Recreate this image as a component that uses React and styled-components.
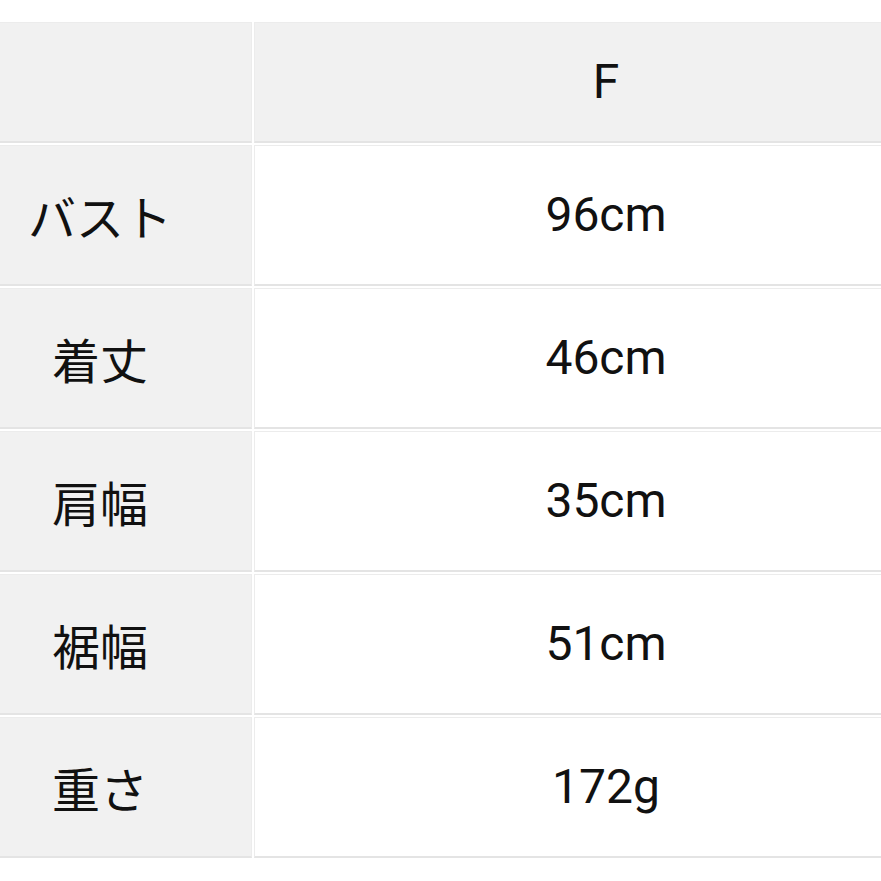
import React from "react";
import styled, { createGlobalStyle } from "styled-components";

const GlobalStyle = createGlobalStyle`
  html, body {
    margin: 0;
    padding: 0;
    background: #ffffff;
  }
  body {
    font-family: Roboto, "Noto Sans CJK JP", sans-serif;
    color: #111111;
  }
`;

const Page = styled.div`
  width: 881px;
  height: 881px;
  overflow: hidden;
  padding-top: 22px;
  box-sizing: border-box;
`;

const SizeTable = styled.div`
  display: grid;
  grid-template-columns: 304px 704px;
  grid-template-rows: 121px repeat(5, 141px);
  gap: 2px;
  margin-left: -52px;
  width: max-content;
`;

const Cell = styled.div`
  display: flex;
  align-items: center;
  justify-content: center;
  box-sizing: border-box;
  background: ${(props) => (props.head ? "#f1f1f1" : "#ffffff")};
  border: 1px solid #ececec;
  border-bottom: 2px solid #e4e4e4;
  font-size: 48px;
  line-height: 1;
  font-family: ${(props) =>
    props.jp
      ? `"Noto Sans CJK JP", sans-serif`
      : `Roboto, "Noto Sans CJK JP", sans-serif`};
  color: #111111;
`;

const rows = [
  { label: "バスト", value: "96cm" },
  { label: "着丈", value: "46cm" },
  { label: "肩幅", value: "35cm" },
  { label: "裾幅", value: "51cm" },
  { label: "重さ", value: "172g" },
];

export default function App() {
  return (
    <>
      <GlobalStyle />
      <Page>
        <SizeTable>
          <Cell head />
          <Cell head>F</Cell>
          {rows.map((row) => (
            <React.Fragment key={row.label}>
              <Cell head jp>
                {row.label}
              </Cell>
              <Cell>{row.value}</Cell>
            </React.Fragment>
          ))}
        </SizeTable>
      </Page>
    </>
  );
}
